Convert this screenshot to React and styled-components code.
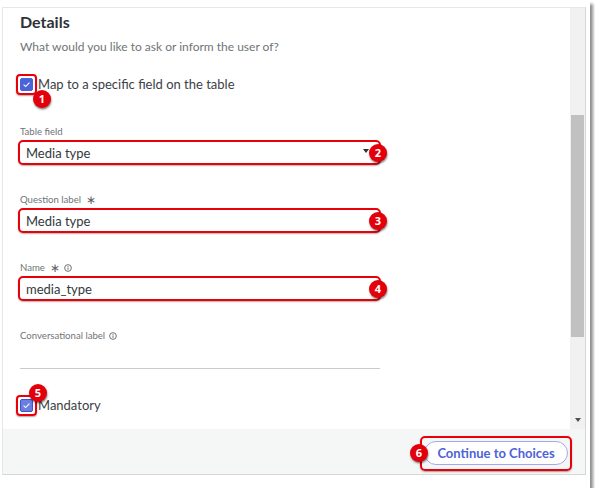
import React from "react";
import styled, { createGlobalStyle } from "styled-components";

const Global = createGlobalStyle`
  html, body { margin: 0; padding: 0; background: #ffffff; }
  body { font-family: Lato, "Open Sans", sans-serif; }
  * { box-sizing: border-box; }
`;

const Frame = styled.div`
  width: 590px;
  height: 488px;
  padding: 7px 4px 13px 2px;
  background: #ffffff;
  box-shadow: 3px 4px 3px rgba(0, 0, 0, 0.45);
`;

const Dialog = styled.div`
  width: 584px;
  height: 468px;
  border: 1px solid #e6e7e7;
  border-right-color: #d6d7d7;
  border-bottom-color: #d6d7d7;
  display: flex;
  flex-direction: column;
`;

const Body = styled.div`
  height: 421px;
  display: flex;
  background: #ffffff;
`;

const Content = styled.div`
  flex: 1;
  padding: 4px 0 0 17px;
  display: flex;
  flex-direction: column;
  align-items: flex-start;
`;

const Heading = styled.div`
  font-size: 16px;
  font-weight: 700;
  line-height: 20px;
  color: #2e3236;
`;

const Subtitle = styled.div`
  margin-top: 5px;
  font-size: 12px;
  line-height: 20px;
  color: #6f7579;
`;

const CheckRow = styled.label`
  margin-top: ${(p) => p.$mt}px;
  height: 20px;
  display: flex;
  align-items: center;
  gap: 5px;
  font-size: 13px;
  color: #3c4146;
`;

const Highlight = styled.div`
  position: relative;
  &::after {
    content: "";
    position: absolute;
    inset: ${(p) => p.$inset || "-4px"};
    border: 2.5px solid #e8000a;
    border-radius: ${(p) => p.$radius || 4}px;
    box-shadow: 0 1px 1.5px rgba(0, 0, 0, 0.35);
    pointer-events: none;
  }
`;

const Check = styled.span`
  display: flex;
  align-items: center;
  justify-content: center;
  width: 13px;
  height: 13px;
  border-radius: 2px;
  background: ${(p) => p.$bg || "#4a63d8"};
  border: 1px solid ${(p) => p.$border || "#4a63d8"};
`;

const Badge = styled.span`
  position: absolute;
  z-index: 2;
  width: 18px;
  height: 18px;
  border-radius: 50%;
  background: #e3000b;
  color: #ffffff;
  font-family: "Open Sans", Lato, sans-serif;
  font-size: 11px;
  font-weight: 700;
  line-height: 18px;
  text-align: center;
  box-shadow: 0.5px 1.5px 2px rgba(0, 0, 0, 0.5);
  left: ${(p) => p.$left}px;
  top: ${(p) => p.$top}px;
`;

const Field = styled.div`
  margin-top: ${(p) => p.$mt}px;
  display: flex;
  flex-direction: column;
  gap: 1px;
`;

const Label = styled.div`
  display: flex;
  align-items: center;
  gap: 4px;
  font-size: 9.6px;
  line-height: 14px;
  color: #6f7579;
`;

const Star = styled.span`
  font-size: 12px;
  line-height: 14px;
  color: #5a6065;
  margin-left: 1px;
`;

const InputBox = styled.div`
  position: relative;
  margin-left: -2px;
  width: 363px;
  height: 25px;
  border: 2.5px solid #e8000a;
  border-radius: 5px;
  box-shadow: 0 1px 1.5px rgba(0, 0, 0, 0.3);
  display: flex;
  align-items: center;
  padding-left: 6px;
  font-size: 13px;
  color: #33383c;
  background: #ffffff;
`;

const Arrow = styled.span`
  position: absolute;
  right: 10px;
  top: 7px;
  width: 0;
  height: 0;
  border-left: 3.5px solid transparent;
  border-right: 3.5px solid transparent;
  border-top: 4px solid #2e3236;
`;

const BoxBadge = styled(Badge)`
  left: auto;
  right: -8px;
  top: 50%;
  transform: translateY(-50%);
`;

const LineInput = styled.div`
  width: 360px;
  height: 25px;
  border-bottom: 1px solid #c9cbcc;
`;

const Scrollbar = styled.div`
  width: 15px;
  background: #f1f1f1;
  display: flex;
  flex-direction: column;
  align-items: center;
  padding-top: 107px;
`;

const Thumb = styled.div`
  width: 13px;
  height: 222px;
  background: #c1c1c1;
`;

const DownArrow = styled.div`
  margin-top: auto;
  margin-bottom: 7px;
  width: 0;
  height: 0;
  border-left: 3.5px solid transparent;
  border-right: 3.5px solid transparent;
  border-top: 4px solid #505050;
`;

const Footer = styled.div`
  height: 45px;
  background: #f5f6f6;
  display: flex;
  align-items: center;
  justify-content: flex-end;
  padding: 2px 17px 0 0;
`;

const Button = styled.button`
  height: 24px;
  width: 144px;
  border-radius: 12px;
  border: 1px solid #9eacee;
  background: #ffffff;
  color: #4e62d8;
  font-family: Lato, sans-serif;
  font-size: 13px;
  font-weight: 700;
  padding: 0;
  display: block;
`;

const Info = () => (
  <svg width="8" height="8" viewBox="0 0 10 10">
    <circle cx="5" cy="5" r="4.2" fill="none" stroke="#5a6065" strokeWidth="1.1" />
    <rect x="4.45" y="4.3" width="1.1" height="3" fill="#5a6065" />
    <rect x="4.45" y="2.5" width="1.1" height="1.1" fill="#5a6065" />
  </svg>
);

const Tick = () => (
  <svg width="9" height="9" viewBox="0 0 10 10">
    <path d="M1.8 5.2 L4 7.3 L8.3 2.8" fill="none" stroke="#ffffff" strokeWidth="1.2" />
  </svg>
);

export default function App() {
  return (
    <>
      <Global />
      <Frame>
        <Dialog>
          <Body>
            <Content>
              <Heading>Details</Heading>
              <Subtitle>What would you like to ask or inform the user of?</Subtitle>
              <CheckRow $mt={17}>
                <Highlight>
                  <Check>
                    <Tick />
                  </Check>
                  <Badge $left={13} $top={12}>1</Badge>
                </Highlight>
                Map to a specific field on the table
              </CheckRow>

              <Field $mt={31}>
                <Label>Table field</Label>
                <InputBox>
                  Media type
                  <Arrow />
                  <BoxBadge>2</BoxBadge>
                </InputBox>
              </Field>

              <Field $mt={28}>
                <Label>
                  Question label <Star>∗</Star>
                </Label>
                <InputBox>
                  Media type
                  <BoxBadge>3</BoxBadge>
                </InputBox>
              </Field>

              <Field $mt={28}>
                <Label>
                  Name <Star>∗</Star>
                  <Info />
                </Label>
                <InputBox>
                  media_type
                  <BoxBadge>4</BoxBadge>
                </InputBox>
              </Field>

              <Field $mt={28}>
                <Label>
                  Conversational label <Info />
                </Label>
                <LineInput />
              </Field>

              <CheckRow $mt={26}>
                <Highlight>
                  <Check $bg="#6b7fe3" $border="#3e54c8">
                    <Tick />
                  </Check>
                  <Badge $left={9} $top={-15}>5</Badge>
                </Highlight>
                Mandatory
              </CheckRow>
            </Content>
            <Scrollbar>
              <Thumb />
              <DownArrow />
            </Scrollbar>
          </Body>
          <Footer>
            <Highlight $inset="-5px -4px -6px -4px" $radius={5}>
              <Button>Continue to Choices</Button>
              <Badge $left={-14} $top={3}>6</Badge>
            </Highlight>
          </Footer>
        </Dialog>
      </Frame>
    </>
  );
}
